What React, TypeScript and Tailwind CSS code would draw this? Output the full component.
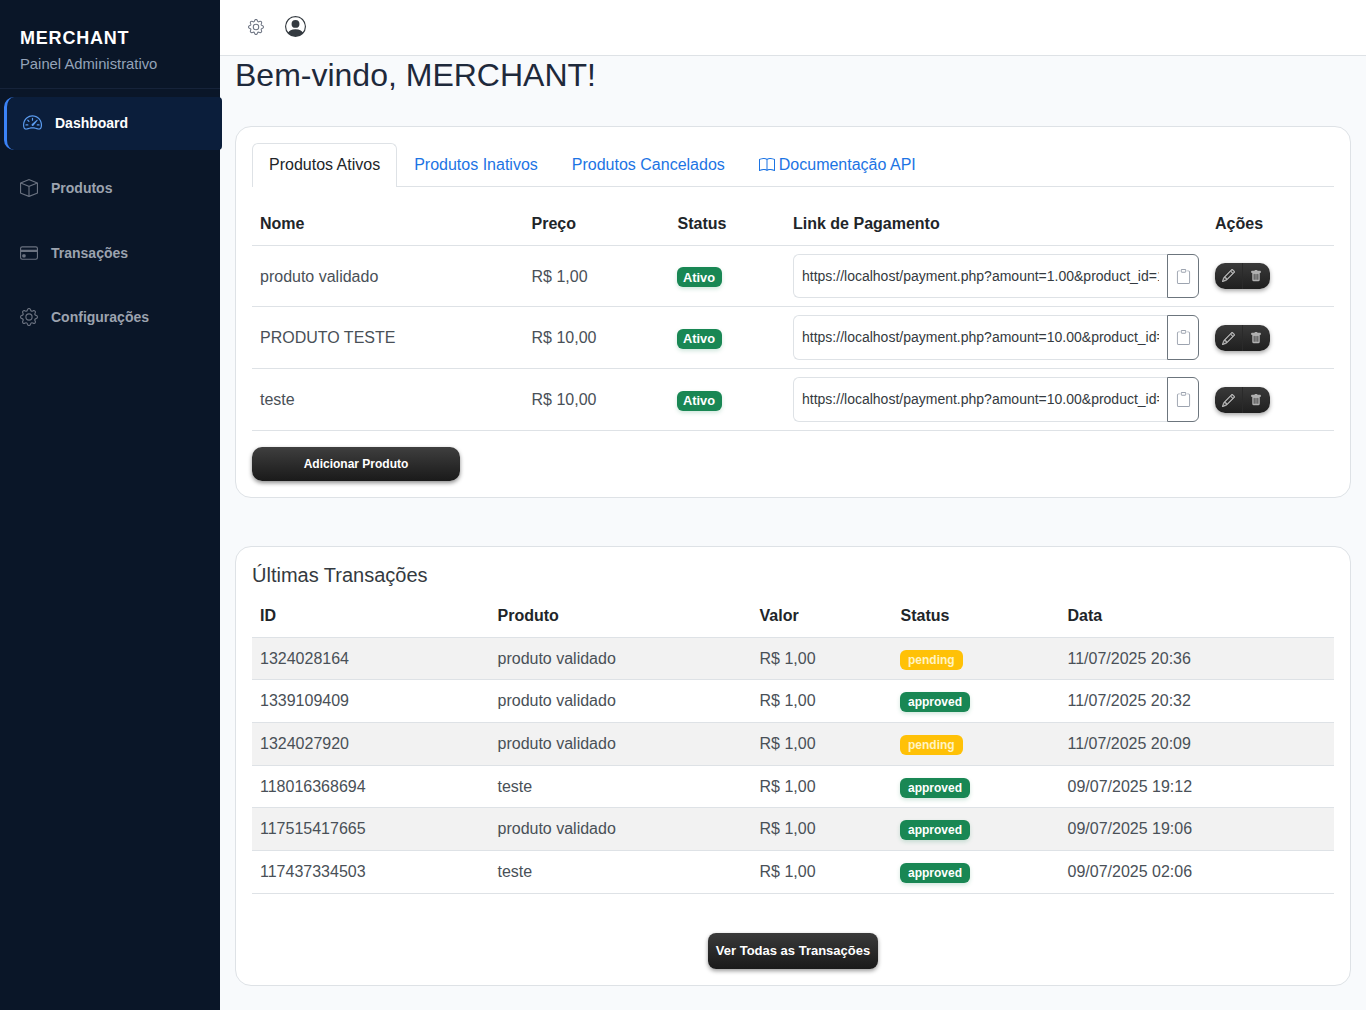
import React from "react";
import { BsSpeedometer2, BsBox, BsCreditCard, BsGear, BsPersonCircle, BsBook, BsClipboard, BsPencil, BsTrashFill } from "react-icons/bs";

const products = [
  { name: "produto validado", price: "R$ 1,00", link: "https://localhost/payment.php?amount=1.00&product_id=1&token=abc", h: "h-[61px]", act: "pt-0", inp: "mt-px h-[44px]" },
  { name: "PRODUTO TESTE", price: "R$ 10,00", link: "https://localhost/payment.php?amount=10.00&product_id=2&token=abc", h: "h-[62px]", act: "pt-[2px]", inp: "h-[45px]" },
  { name: "teste", price: "R$ 10,00", link: "https://localhost/payment.php?amount=10.00&product_id=3&token=abc", h: "h-[62px]", act: "pt-[2px]", inp: "h-[45px]" },
];

const txs = [
  ["1324028164", "produto validado", "R$ 1,00", "pending", "11/07/2025 20:36"],
  ["1339109409", "produto validado", "R$ 1,00", "approved", "11/07/2025 20:32"],
  ["1324027920", "produto validado", "R$ 1,00", "pending", "11/07/2025 20:09"],
  ["118016368694", "teste", "R$ 1,00", "approved", "09/07/2025 19:12"],
  ["117515417665", "produto validado", "R$ 1,00", "approved", "09/07/2025 19:06"],
  ["117437334503", "teste", "R$ 1,00", "approved", "09/07/2025 02:06"],
];

function NavItem({ icon, label, extra }: { icon: React.ReactNode; label: string; extra: string }) {
  return (
    <div className={`flex h-[53px] items-center pl-[19px] text-sm font-bold text-[#9ca3af] ${extra}`}>
      <span className="mr-[13px] flex w-[19px] justify-center text-[18px] text-[#6b7280]">{icon}</span>
      {label}
    </div>
  );
}

export default function App() {
  return (
    <div className="flex min-h-[1010px] bg-[#f8fafc] [font-family:Liberation_Sans,Arial,sans-serif] text-[#212529]">
      <aside className="w-[220px] shrink-0 bg-[#0a1628]">
        <div className="h-[89px] border-b border-[#16233a] pl-5 pt-[27px]">
          <div className="text-[18px] font-bold leading-[22px] tracking-[0.8px] text-white">MERCHANT</div>
          <div className="mt-[5px] text-[14.8px] leading-[20px] text-[#94a3b8]">Painel Administrativo</div>
        </div>
        <nav className="flex flex-col gap-[11.7px] pt-2">
          <div className="ml-1 -mr-0.5 flex h-[53px] items-center rounded-l-[10px] rounded-r-sm border-l-[3px] border-[#3b82f6] bg-[#0b1e3b] pb-[2px] pl-4 text-sm font-bold text-white">
            <BsSpeedometer2 className="mr-[13px] text-[19px] text-[#5b9cf0]" />
            Dashboard
          </div>
          <NavItem icon={<BsBox />} label="Produtos" extra="pb-0" />
          <NavItem icon={<BsCreditCard />} label="Transações" extra="pb-0" />
          <NavItem icon={<BsGear />} label="Configurações" extra="pb-[2px]" />
        </nav>
      </aside>

      <div className="min-w-0 flex-1">
        <header className="flex h-[56px] items-center gap-[21px] border-b border-[#dee2e6] bg-white pb-[2px] pl-[28px]">
          <BsGear className="text-[16px] text-[#6b7280]" />
          <BsPersonCircle className="text-[21px] text-[#343a40]" />
        </header>
        <main className="px-[15px] pb-6">
          <h1 className="text-[32px] font-normal leading-[38px] text-[#1e293b]">Bem-vindo, MERCHANT!</h1>

          <section className="mt-[32px] h-[372px] rounded-2xl border border-[#dee2e6] bg-white p-4">
            <div className="flex h-[44px] border-b border-[#dee2e6] text-base">
              <div className="-mb-px flex h-[44px] items-center rounded-t-md border border-b-0 border-[#dee2e6] bg-white px-4 pb-[2px] text-[#212529]">Produtos Ativos</div>
              <div className="flex items-center px-[17px] text-[#1c74e4]">Produtos Inativos</div>
              <div className="flex items-center px-[17px] text-[#1c74e4]">Produtos Cancelados</div>
              <div className="flex items-center gap-1 px-[17px] text-[#1c74e4]"><BsBook className="text-[16px]" />Documentação API</div>
            </div>
            <table className="mt-4 w-full table-fixed border-collapse text-base">
              <colgroup>
                <col className="w-[271.5px]" />
                <col className="w-[146px]" />
                <col className="w-[115.5px]" />
                <col className="w-[422px]" />
                <col />
              </colgroup>
              <thead>
                <tr className="h-[42px] border-b border-[#dee2e6] text-left">
                  <th className="px-2 font-bold">Nome</th>
                  <th className="px-2 font-bold">Preço</th>
                  <th className="px-2 font-bold">Status</th>
                  <th className="px-2 font-bold">Link de Pagamento</th>
                  <th className="px-2 font-bold">Ações</th>
                </tr>
              </thead>
              <tbody>
                {products.map((p) => (
                  <tr key={p.name} className={`${p.h} border-b border-[#dee2e6] text-[#495057]`}>
                    <td className="px-2 pt-[2px]">{p.name}</td>
                    <td className="px-2 pt-[2px]">{p.price}</td>
                    <td className="px-2 pt-[2px]">
                      <span className="-ml-px inline-flex h-5 w-[45px] items-center justify-center rounded-md bg-[#198754] text-[12.8px] font-bold text-white shadow-[0_2px_4px_rgba(25,135,84,0.2)]">Ativo</span>
                    </td>
                    <td className="px-2">
                      <div className={`flex w-[406px] ${p.inp}`}>
                        <div className="flex min-w-0 flex-1 items-center overflow-hidden whitespace-nowrap rounded-l-md border border-r-0 border-[#dee2e6] px-2 text-sm text-[#343a40]">
                          <div className="overflow-hidden">{p.link}</div>
                        </div>
                        <div className="flex w-8 items-center justify-center rounded-r-md border border-[#6c757d] bg-white text-[#9ca3af]">
                          <BsClipboard className="text-[15px]" />
                        </div>
                      </div>
                    </td>
                    <td className={`px-2 ${p.act}`}>
                      <div className="flex h-[26px] w-[55px] overflow-hidden rounded-[10px] bg-gradient-to-b from-[#3a3a3a] to-[#1f1f1f] shadow-[0_2px_4px_rgba(0,0,0,0.35)]">
                        <span className="flex w-[28px] items-center justify-center border-r border-[#2a2a2a] text-[13px] text-[#c0c0c0]"><BsPencil className="stroke-current stroke-[0.5]" /></span>
                        <span className="flex w-[26px] items-center justify-center text-[12px] text-[#b0b0b0]"><BsTrashFill /></span>
                      </div>
                    </td>
                  </tr>
                ))}
              </tbody>
            </table>
            <button className="mt-4 h-[34px] w-[208px] rounded-[10px] bg-gradient-to-b from-[#3f3f3f] to-[#1a1a1a] text-xs font-bold text-white shadow-[0_2px_4px_rgba(0,0,0,0.45)]">Adicionar Produto</button>
          </section>

          <section className="mt-[48px] h-[440px] rounded-2xl border border-[#dee2e6] bg-white px-4 pt-[14px]">
            <h2 className="text-[20px] font-normal leading-[28px] text-[#343a40]">Últimas Transações</h2>
            <table className="mt-[6px] w-full table-fixed border-collapse text-base">
              <colgroup>
                <col className="w-[237.5px]" />
                <col className="w-[262px]" />
                <col className="w-[141px]" />
                <col className="w-[167px]" />
                <col />
              </colgroup>
              <thead>
                <tr className="h-[42px] border-b border-[#dee2e6] text-left">
                  <th className="px-2 font-bold">ID</th>
                  <th className="px-2 font-bold">Produto</th>
                  <th className="px-2 font-bold">Valor</th>
                  <th className="px-2 font-bold">Status</th>
                  <th className="px-2 font-bold">Data</th>
                </tr>
              </thead>
              <tbody>
                {txs.map((t, i) => {
                  const shift = i === 0 || i === 3 ? "pt-[2px]" : "pt-0";
                  return (
                    <tr key={t[0]} className={`h-[42.7px] border-b border-[#dee2e6] text-[#495057] ${i % 2 === 0 ? "bg-[#f2f2f2]" : "bg-white"}`}>
                      <td className={`px-2 ${shift}`}>{t[0]}</td>
                      <td className={`px-2 ${shift}`}>{t[1]}</td>
                      <td className={`px-2 ${shift}`}>{t[2]}</td>
                      <td className={`px-2 ${shift}`}>
                        <span className={`-ml-[0.5px] inline-flex h-5 items-center rounded-md px-2 text-xs font-bold ${t[3] === "pending" ? "bg-[#ffc107] text-[#fff3c4]" : "bg-[#198754] text-white shadow-[0_2px_4px_rgba(25,135,84,0.2)]"}`}>{t[3]}</span>
                      </td>
                      <td className={`px-2 ${shift}`}>{t[4]}</td>
                    </tr>
                  );
                })}
              </tbody>
            </table>
            <div className="mt-[39.5px] flex justify-center">
              <button className="h-[36px] w-[170px] rounded-lg bg-gradient-to-b from-[#3a3a3a] to-[#1a1a1a] text-[13px] font-bold text-white shadow-[0_2px_4px_rgba(0,0,0,0.4)]">Ver Todas as Transações</button>
            </div>
          </section>
        </main>
      </div>
    </div>
  );
}
